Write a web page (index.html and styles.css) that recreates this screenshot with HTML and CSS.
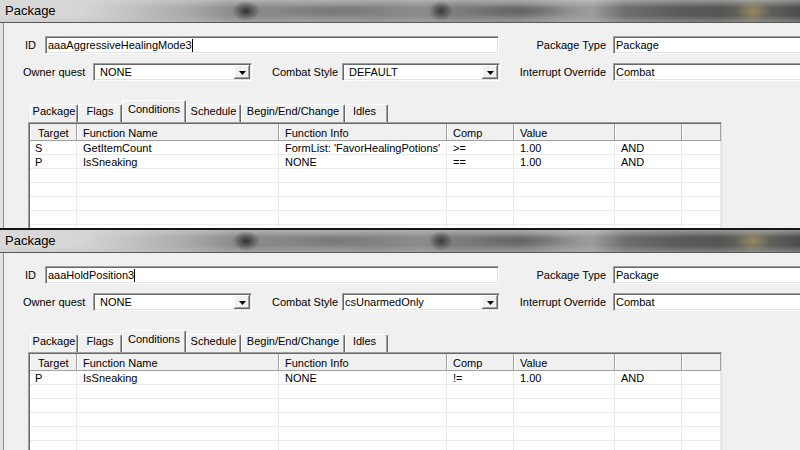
FILE: index.html
```html
<!DOCTYPE html>
<html>
<head>
<meta charset="utf-8">
<link rel="stylesheet" href="styles.css">
</head>
<body>
<div class="win win-a">
  <div class="title">Package</div>
  <div class="body">
    <div class="row r1">
      <span class="lbl l-id">ID</span>
      <div class="sunken edit w-id">aaaAggressiveHealingMode3<span class="caret"></span></div>
      <span class="lbl l-right">Package Type</span>
      <div class="sunken edit w-right">Package</div>
    </div>
    <div class="row r2">
      <span class="lbl l-owner">Owner quest</span>
      <div class="sunken combo w-owner"><span class="val">NONE</span><span class="btn"><svg width="7" height="4" viewBox="0 0 7 4"><polygon points="0,0 7,0 3.5,4" fill="#000"/></svg></span></div>
      <span class="lbl l-combat">Combat Style</span>
      <div class="sunken combo w-combat"><span class="val">DEFAULT</span><span class="btn"><svg width="7" height="4" viewBox="0 0 7 4"><polygon points="0,0 7,0 3.5,4" fill="#000"/></svg></span></div>
      <span class="lbl l-right">Interrupt Override</span>
      <div class="sunken edit w-right">Combat</div>
    </div>
    <div class="tabs">
      <span class="tab t1">Package</span>
      <span class="tab t2">Flags</span>
      <span class="tab t3 sel">Conditions</span>
      <span class="tab t4">Schedule</span>
      <span class="tab t5">Begin/End/Change</span>
      <span class="tab t6">Idles</span>
    </div>
    <div class="list">
      <div class="list-in">
        <div class="lrow head"><span class="first">Target</span><span>Function Name</span><span>Function Info</span><span>Comp</span><span>Value</span><span></span><span></span></div>
        <div class="lrow"><span>S</span><span>GetItemCount</span><span>FormList: 'FavorHealingPotions'</span><span>&gt;=</span><span>1.00</span><span>AND</span><span></span></div>
        <div class="lrow"><span>P</span><span>IsSneaking</span><span>NONE</span><span>==</span><span>1.00</span><span>AND</span><span></span></div>
        <div class="lrow"><span></span><span></span><span></span><span></span><span></span><span></span><span></span></div>
        <div class="lrow"><span></span><span></span><span></span><span></span><span></span><span></span><span></span></div>
        <div class="lrow"><span></span><span></span><span></span><span></span><span></span><span></span><span></span></div>
        <div class="lrow"><span></span><span></span><span></span><span></span><span></span><span></span><span></span></div>
        <div class="lrow"><span></span><span></span><span></span><span></span><span></span><span></span><span></span></div>
      </div>
    </div>
  </div>
</div>
<div class="win win-b">
  <div class="title">Package</div>
  <div class="body">
    <div class="row r1">
      <span class="lbl l-id">ID</span>
      <div class="sunken edit w-id">aaaHoldPosition3<span class="caret"></span></div>
      <span class="lbl l-right">Package Type</span>
      <div class="sunken edit w-right">Package</div>
    </div>
    <div class="row r2">
      <span class="lbl l-owner">Owner quest</span>
      <div class="sunken combo w-owner"><span class="val">NONE</span><span class="btn"><svg width="7" height="4" viewBox="0 0 7 4"><polygon points="0,0 7,0 3.5,4" fill="#000"/></svg></span></div>
      <span class="lbl l-combat">Combat Style</span>
      <div class="sunken combo w-combat"><span class="val tight">csUnarmedOnly</span><span class="btn"><svg width="7" height="4" viewBox="0 0 7 4"><polygon points="0,0 7,0 3.5,4" fill="#000"/></svg></span></div>
      <span class="lbl l-right">Interrupt Override</span>
      <div class="sunken edit w-right">Combat</div>
    </div>
    <div class="tabs">
      <span class="tab t1">Package</span>
      <span class="tab t2">Flags</span>
      <span class="tab t3 sel">Conditions</span>
      <span class="tab t4">Schedule</span>
      <span class="tab t5">Begin/End/Change</span>
      <span class="tab t6">Idles</span>
    </div>
    <div class="list">
      <div class="list-in">
        <div class="lrow head"><span class="first">Target</span><span>Function Name</span><span>Function Info</span><span>Comp</span><span>Value</span><span></span><span></span></div>
        <div class="lrow"><span>P</span><span>IsSneaking</span><span>NONE</span><span>!=</span><span>1.00</span><span>AND</span><span></span></div>
        <div class="lrow"><span></span><span></span><span></span><span></span><span></span><span></span><span></span></div>
        <div class="lrow"><span></span><span></span><span></span><span></span><span></span><span></span><span></span></div>
        <div class="lrow"><span></span><span></span><span></span><span></span><span></span><span></span><span></span></div>
        <div class="lrow"><span></span><span></span><span></span><span></span><span></span><span></span><span></span></div>
        <div class="lrow"><span></span><span></span><span></span><span></span><span></span><span></span><span></span></div>
      </div>
    </div>
  </div>
</div>
</body>
</html>
```
FILE: styles.css
```css
* { box-sizing: border-box; margin: 0; padding: 0; }
html, body { width: 800px; height: 450px; overflow: hidden; }
body {
  background: #f0f0f0;
  font-family: "Liberation Sans", Arial, sans-serif;
  font-size: 11px;
  color: #000;
}
.win { display: flex; flex-direction: column; overflow: hidden; }
.win-a { height: 230px; border-bottom: 2px solid #151515; }
.win-b { height: 220px; }
.title {
  flex: none;
  height: 23px;
  border-bottom: 1px solid #585858;
  font-size: 13px;
  line-height: 22px;
  padding-left: 5px;
  background:
    radial-gradient(ellipse 14px 10px at 246px 11px, rgba(40,40,40,0.9), rgba(40,40,40,0) 100%),
    radial-gradient(ellipse 12px 10px at 441px 11px, rgba(45,45,45,0.85), rgba(45,45,45,0) 100%),
    radial-gradient(ellipse 60px 7px at 520px 11px, rgba(70,70,70,0.45), rgba(70,70,70,0) 100%),
    radial-gradient(ellipse 60px 7px at 330px 11px, rgba(90,90,90,0.35), rgba(90,90,90,0) 100%),
    radial-gradient(ellipse 18px 10px at 753px 11px, rgba(180,160,100,0.55), rgba(180,160,100,0) 100%),
    linear-gradient(to bottom, rgba(215,215,215,0.5) 0, rgba(215,215,215,0) 35%, rgba(215,215,215,0) 70%, rgba(190,190,190,0.4) 100%),
    linear-gradient(to right, #dadada 0, #d6d6d6 80px, #c2c2c2 130px, #a8a8a8 190px, #8e8e8e 230px, #888888 270px, #8a8a8a 300px, #848484 380px, #8c8c8c 420px, #7c7c7c 460px, #7a7a7a 520px, #939393 565px, #9c9c9c 592px, #6e6e6e 625px, #5a5a5a 680px, #555555 722px, #6e6a5e 752px, #585858 782px, #4c4c4c 800px);
}
.body {
  flex: 1;
  overflow: hidden;
  padding-top: 13px;
  background: #f0f0f0;
  box-shadow: inset 3px 0 0 #e2e2e2, inset 4px 0 0 #8e8e8e;
}
.row { display: flex; align-items: center; height: 18px; white-space: nowrap; }
.r2 { margin-top: 9px; }
.lbl { flex: none; }
.l-id { width: 20px; margin-left: 25px; }
.l-owner { width: 70px; margin-left: 23px; }
.l-combat { width: 90px; padding-left: 20px; }
.l-right { text-align: right; padding-right: 7px; }
.r1 .l-right { width: 114px; }
.r2 .l-right { width: 113px; }
.sunken {
  flex: none;
  height: 18px;
  background: #fff;
  border: 1px solid;
  border-color: #a0a0a0 #ffffff #ffffff #a0a0a0;
  box-shadow: inset 1px 1px 0 #696969, inset -1px -1px 0 #e3e3e3;
}
.edit { padding-left: 2px; line-height: 16px; display: flex; align-items: center; }
.caret { display: inline-block; width: 1px; height: 13px; background: #000; }
.w-id { width: 454px; }
.w-right { width: 200px; }
.combo { display: flex; align-items: center; padding: 1px; }
.w-owner { width: 159px; }
.w-combat { width: 158px; }
.val { flex: 1; padding-left: 5px; line-height: 14px; overflow: hidden; }
.val.tight { padding-left: 1px; }
.btn {
  flex: none;
  width: 16px;
  height: 14px;
  display: flex;
  align-items: center;
  justify-content: center;
  background: #f0f0f0;
  box-shadow: inset -1px -1px 0 #696969, inset 1px 1px 0 #ffffff, inset -2px -2px 0 #a0a0a0;
}
.btn svg { display: block; margin-top: 1px; }
.tabs {
  display: flex;
  align-items: flex-end;
  height: 22px;
  margin-top: 19px;
  padding-left: 30px;
}
.tab {
  flex: none;
  height: 18px;
  line-height: 13px;
  text-align: center;
  white-space: nowrap;
  border-top: 1px solid #ffffff;
  border-left: 1px solid #ffffff;
  border-right: 1px solid #696969;
  box-shadow: inset -1px 0 0 #a0a0a0;
  border-radius: 2px 2px 0 0;
}
.tab.sel { height: 22px; line-height: 17px; }
.t1 { width: 48px; }
.t2 { width: 44px; }
.t3 { width: 64px; }
.t4 { width: 55px; }
.t5 { width: 104px; }
.t6 { width: 43px; padding-right: 4px; }
.list {
  width: 694px;
  height: 200px;
  margin-left: 28px;
  border-top: 1px solid #a0a0a0;
  border-left: 1px solid #a0a0a0;
  border-right: 1px solid #e0e0e0;
  background: #fff;
}
.list-in {
  border-top: 1px solid #696969;
  border-left: 1px solid #696969;
  height: 100%;
}
.lrow {
  display: grid;
  grid-template-columns: 47px 202px 168px 67px 101px 67px 39px;
  height: 14px;
  border-bottom: 1px solid #ececec;
  white-space: nowrap;
}
.lrow span {
  border-right: 1px solid #ececec;
  padding-left: 5px;
  line-height: 15px;
  height: 13px;
}
.lrow span + span { padding-left: 6px; }
.lrow.head {
  height: 17px;
  border-bottom: 1px solid #a0a0a0;
  background: #f0f0f0;
}
.lrow.head span {
  height: 16px;
  line-height: 18px;
  border-right: 1px solid #a0a0a0;
  box-shadow: inset 1px 0 0 #ffffff;
  padding-left: 6px;
}
.lrow.head span.first { padding-left: 8px; }
```
